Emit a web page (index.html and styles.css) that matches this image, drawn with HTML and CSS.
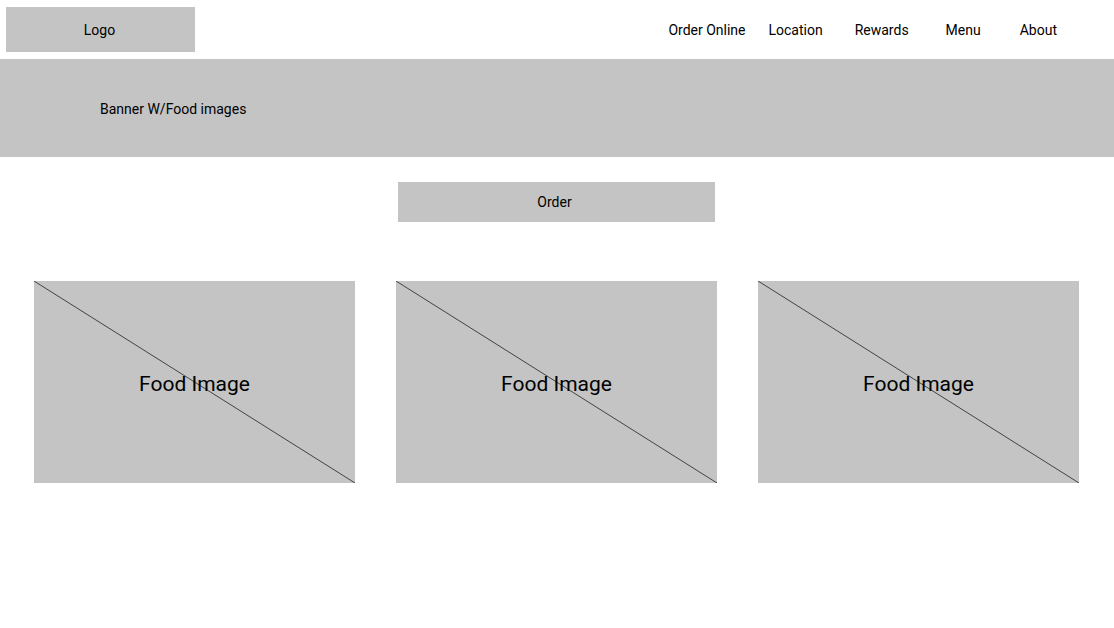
FILE: index.html
```html
<!DOCTYPE html>
<html>
    <head>
        <title>Restaurant</title>
        <meta name="viewport" content="width=device-width, initial-scale=1">
        <link rel="stylesheet" href="styles.css">
    </head>

    <body>
        <header class="top-bar">
            <div class="logo">Logo</div>
            <nav class="nav">
                <a class="nav-link">Order Online</a>
                <a class="nav-link">Location</a>
                <a class="nav-link">Rewards</a>
                <a class="nav-link">Menu</a>
                <a class="nav-link">About</a>
            </nav>
        </header>

        <div class="banner">Banner W/Food images</div>

        <div class="order-row">
            <div class="order-button">Order</div>
        </div>

        <div class="food-row">
            <div class="food-card">
                <svg class="cross" viewBox="0 0 100 100" preserveAspectRatio="none"><line x1="0" y1="0" x2="100" y2="100"></line></svg>
                <span class="food-label">Food Image</span>
            </div>
            <div class="food-card">
                <svg class="cross" viewBox="0 0 100 100" preserveAspectRatio="none"><line x1="0" y1="0" x2="100" y2="100"></line></svg>
                <span class="food-label">Food Image</span>
            </div>
            <div class="food-card">
                <svg class="cross" viewBox="0 0 100 100" preserveAspectRatio="none"><line x1="0" y1="0" x2="100" y2="100"></line></svg>
                <span class="food-label">Food Image</span>
            </div>
        </div>
    </body>
</html>
```
FILE: styles.css
```css
body {
    margin: 0;
    padding: 0;
    background: #fff;
    font-family: Roboto, "Liberation Sans", sans-serif;
    font-size: 14px;
    color: #000;
}

.top-bar {
    display: flex;
    align-items: center;
    justify-content: space-between;
    height: 59px;
}

.logo {
    display: flex;
    align-items: center;
    justify-content: center;
    width: 189px;
    height: 45px;
    margin: 0 0 0 6px;
    padding-right: 2px;
    box-sizing: border-box;
    background: #c4c4c4;
}

.nav {
    display: flex;
    align-items: center;
    padding-right: 57px;
}

.nav-link {
    color: #000;
    text-decoration: none;
}

.nav-link:nth-child(2) { margin-left: 23px; }
.nav-link:nth-child(3) { margin-left: 32px; }
.nav-link:nth-child(4) { margin-left: 37px; }
.nav-link:nth-child(5) { margin-left: 39px; }

.banner {
    display: flex;
    align-items: center;
    height: 98px;
    padding: 2px 0 0 100px;
    box-sizing: border-box;
    background: #c4c4c4;
}

.order-row {
    display: flex;
    justify-content: center;
    padding: 25px 1px 0 0;
}

.order-button {
    display: flex;
    align-items: center;
    justify-content: center;
    width: 317px;
    height: 40px;
    padding-right: 4px;
    box-sizing: border-box;
    background: #c4c4c4;
}

.food-row {
    display: flex;
    gap: 41px;
    padding: 59px 34px 0 34px;
}

.food-card {
    position: relative;
    display: flex;
    align-items: center;
    justify-content: center;
    width: 321px;
    height: 202px;
    background: #c4c4c4;
}

.cross {
    position: absolute;
    top: 0;
    left: 0;
    width: 100%;
    height: 100%;
}

.cross line {
    stroke: #222;
    stroke-width: 0.8;
    vector-effect: non-scaling-stroke;
}

.food-label {
    position: relative;
    font-size: 21px;
    padding-top: 3px;
}
```
